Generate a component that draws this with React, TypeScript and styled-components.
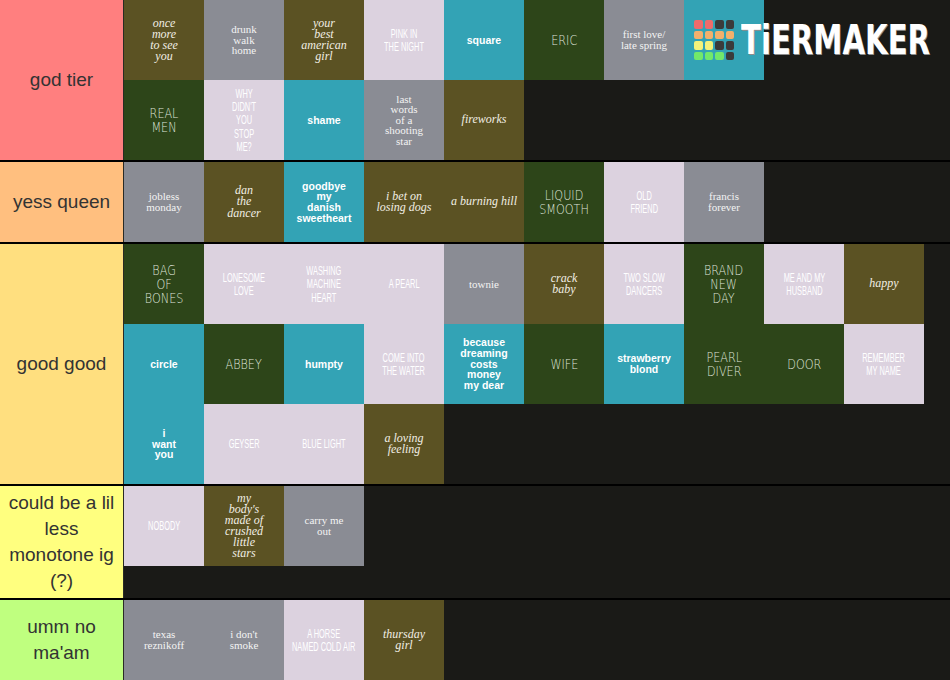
import React from "react";
import styled, { createGlobalStyle, css } from "styled-components";

type Kind = "script" | "serif" | "cond" | "thin" | "bold";

interface TileData {
  k: Kind;
  t: string;
}

interface Tier {
  label: string;
  color: string;
  tiles: TileData[];
  logoAfter?: number;
}

const tiers: Tier[] = [
  {
    label: "god tier",
    color: "#ff7f7f",
    logoAfter: 8,
    tiles: [
      { k: "script", t: "once\nmore\nto see\nyou" },
      { k: "serif", t: "drunk\nwalk\nhome" },
      { k: "script", t: "your\nbest\namerican\ngirl" },
      { k: "cond", t: "PINK IN\nTHE NIGHT" },
      { k: "bold", t: "square" },
      { k: "thin", t: "ERIC" },
      { k: "serif", t: "first love/\nlate spring" },
      { k: "bold", t: "" },
      { k: "thin", t: "REAL\nMEN" },
      { k: "cond", t: "WHY\nDIDN'T\nYOU\nSTOP\nME?" },
      { k: "bold", t: "shame" },
      { k: "serif", t: "last\nwords\nof a\nshooting\nstar" },
      { k: "script", t: "fireworks" },
    ],
  },
  {
    label: "yess queen",
    color: "#ffbf7f",
    tiles: [
      { k: "serif", t: "jobless\nmonday" },
      { k: "script", t: "dan\nthe\ndancer" },
      { k: "bold", t: "goodbye\nmy\ndanish\nsweetheart" },
      { k: "script", t: "i bet on\nlosing dogs" },
      { k: "script", t: "a burning hill" },
      { k: "thin", t: "LIQUID\nSMOOTH" },
      { k: "cond", t: "OLD\nFRIEND" },
      { k: "serif", t: "francis\nforever" },
    ],
  },
  {
    label: "good good",
    color: "#ffdf7f",
    tiles: [
      { k: "thin", t: "BAG\nOF\nBONES" },
      { k: "cond", t: "LONESOME\nLOVE" },
      { k: "cond", t: "WASHING\nMACHINE\nHEART" },
      { k: "cond", t: "A PEARL" },
      { k: "serif", t: "townie" },
      { k: "script", t: "crack\nbaby" },
      { k: "cond", t: "TWO SLOW\nDANCERS" },
      { k: "thin", t: "BRAND\nNEW\nDAY" },
      { k: "cond", t: "ME AND MY\nHUSBAND" },
      { k: "script", t: "happy" },
      { k: "bold", t: "circle" },
      { k: "thin", t: "ABBEY" },
      { k: "bold", t: "humpty" },
      { k: "cond", t: "COME INTO\nTHE WATER" },
      { k: "bold", t: "because\ndreaming\ncosts\nmoney\nmy dear" },
      { k: "thin", t: "WIFE" },
      { k: "bold", t: "strawberry\nblond" },
      { k: "thin", t: "PEARL\nDIVER" },
      { k: "thin", t: "DOOR" },
      { k: "cond", t: "REMEMBER\nMY NAME" },
      { k: "bold", t: "i\nwant\nyou" },
      { k: "cond", t: "GEYSER" },
      { k: "cond", t: "BLUE LIGHT" },
      { k: "script", t: "a loving\nfeeling" },
    ],
  },
  {
    label: "could be a lil less monotone ig (?)",
    color: "#ffff7f",
    tiles: [
      { k: "cond", t: "NOBODY" },
      { k: "script", t: "my\nbody's\nmade of\ncrushed\nlittle\nstars" },
      { k: "serif", t: "carry me\nout" },
    ],
  },
  {
    label: "umm no ma'am",
    color: "#bfff7f",
    tiles: [
      { k: "serif", t: "texas\nreznikoff" },
      { k: "serif", t: "i don't\nsmoke" },
      { k: "cond", t: "A HORSE\nNAMED COLD AIR" },
      { k: "script", t: "thursday\ngirl" },
    ],
  },
];

const bg: Record<Kind, string> = {
  script: "#5b5223",
  serif: "#8a8c94",
  cond: "#dcd2df",
  thin: "#2d4519",
  bold: "#33a3b5",
};

const GlobalStyle = createGlobalStyle`
  html, body {
    margin: 0;
    padding: 0;
    background: #1a1a17;
  }
  body {
    font-family: "Liberation Sans", Arial, sans-serif;
  }
`;

const Board = styled.div`
  width: 950px;
  height: 680px;
  overflow: hidden;
  display: flex;
  flex-direction: column;
  background: #1a1a17;
`;

const Row = styled.div`
  display: flex;
  border-bottom: 2px solid #000;
  flex-shrink: 0;
`;

const Label = styled.div<{ $color: string }>`
  width: 124px;
  min-height: 80px;
  flex-shrink: 0;
  box-sizing: border-box;
  padding: 4px 4px;
  display: flex;
  align-items: center;
  justify-content: center;
  text-align: center;
  background: ${(p) => p.$color};
  border-right: 1px solid #2a2a24;
  color: #333;
  font-family: "Liberation Sans", Arial, sans-serif;
  font-size: 19px;
  line-height: 26px;
`;

const Tiles = styled.div`
  flex: 1;
  display: flex;
  flex-wrap: wrap;
  align-content: flex-start;
  background: #1a1a17;
`;

const Tile = styled.div<{ $kind: Kind }>`
  width: 80px;
  height: 80px;
  display: flex;
  align-items: center;
  justify-content: center;
  background: ${(p) => bg[p.$kind]};
  overflow: hidden;
`;

const kindText: Record<Kind, ReturnType<typeof css>> = {
  script: css`
    font-family: "Liberation Serif", "Times New Roman", serif;
    font-style: italic;
    font-size: 12px;
    line-height: 11.1px;
    color: #f1eee4;
    white-space: pre;
  `,
  serif: css`
    font-family: "Liberation Serif", "Times New Roman", serif;
    font-size: 11px;
    line-height: 10.6px;
    color: #f3f3f3;
    white-space: pre;
  `,
  cond: css`
    font-family: "Liberation Sans", Arial, sans-serif;
    font-size: 13px;
    line-height: 13.3px;
    color: #ffffff;
    white-space: pre;
    transform: scaleX(0.57);
  `,
  thin: css`
    font-family: "DejaVu Sans", "Liberation Sans", sans-serif;
    font-weight: 200;
    font-size: 14px;
    line-height: 14px;
    color: #dfe2d8;
    white-space: pre;
    transform: scaleX(0.8);
  `,
  bold: css`
    font-family: "Liberation Sans", Arial, sans-serif;
    font-weight: 700;
    font-size: 10.5px;
    line-height: 10.7px;
    color: #ffffff;
    white-space: pre;
  `,
};

const TileText = styled.span<{ $kind: Kind }>`
  display: inline-block;
  flex-shrink: 0;
  text-align: center;
  ${(p) => kindText[p.$kind]}
`;

const LogoSpace = styled.div`
  position: relative;
  width: 185px;
  height: 80px;
`;

const Logo = styled.div`
  position: absolute;
  top: 20px;
  left: -70px;
  display: flex;
  align-items: center;
  gap: 7px;
`;

const LogoGrid = styled.div`
  display: grid;
  grid-template-columns: repeat(4, 8.5px);
  grid-auto-rows: 8.5px;
  gap: 2px;
`;

const Cell = styled.div<{ $c: string }>`
  background: ${(p) => p.$c};
  border-radius: 2px;
`;

const LogoText = styled.div`
  font-family: "DejaVu Sans", "Liberation Sans", sans-serif;
  font-weight: 700;
  font-size: 40px;
  line-height: 40px;
  color: #ffffff;
  transform: scaleX(0.73);
  transform-origin: left center;
  text-shadow: 1px 1px 0 #8d8d8d;
  white-space: nowrap;
`;

const R = "#ef6b6b";
const O = "#f4b06c";
const Y = "#f4f37a";
const G = "#72e86b";
const D = "#3b3b3b";
const logoCells = [R, R, D, D, O, O, O, O, Y, Y, D, D, G, G, G, D];

function TierLogo() {
  return (
    <LogoSpace>
      <Logo>
        <LogoGrid>
          {logoCells.map((c, i) => (
            <Cell key={i} $c={c} />
          ))}
        </LogoGrid>
        <LogoText>TiERMAKER</LogoText>
      </Logo>
    </LogoSpace>
  );
}

export default function App() {
  return (
    <>
      <GlobalStyle />
      <Board>
        {tiers.map((tier) => (
          <Row key={tier.label}>
            <Label $color={tier.color}>{tier.label}</Label>
            <Tiles>
              {tier.tiles.map((tile, i) => (
                <React.Fragment key={i}>
                  {tier.logoAfter === i && <TierLogo />}
                  <Tile $kind={tile.k}>
                    <TileText $kind={tile.k}>{tile.t}</TileText>
                  </Tile>
                </React.Fragment>
              ))}
            </Tiles>
          </Row>
        ))}
      </Board>
    </>
  );
}
